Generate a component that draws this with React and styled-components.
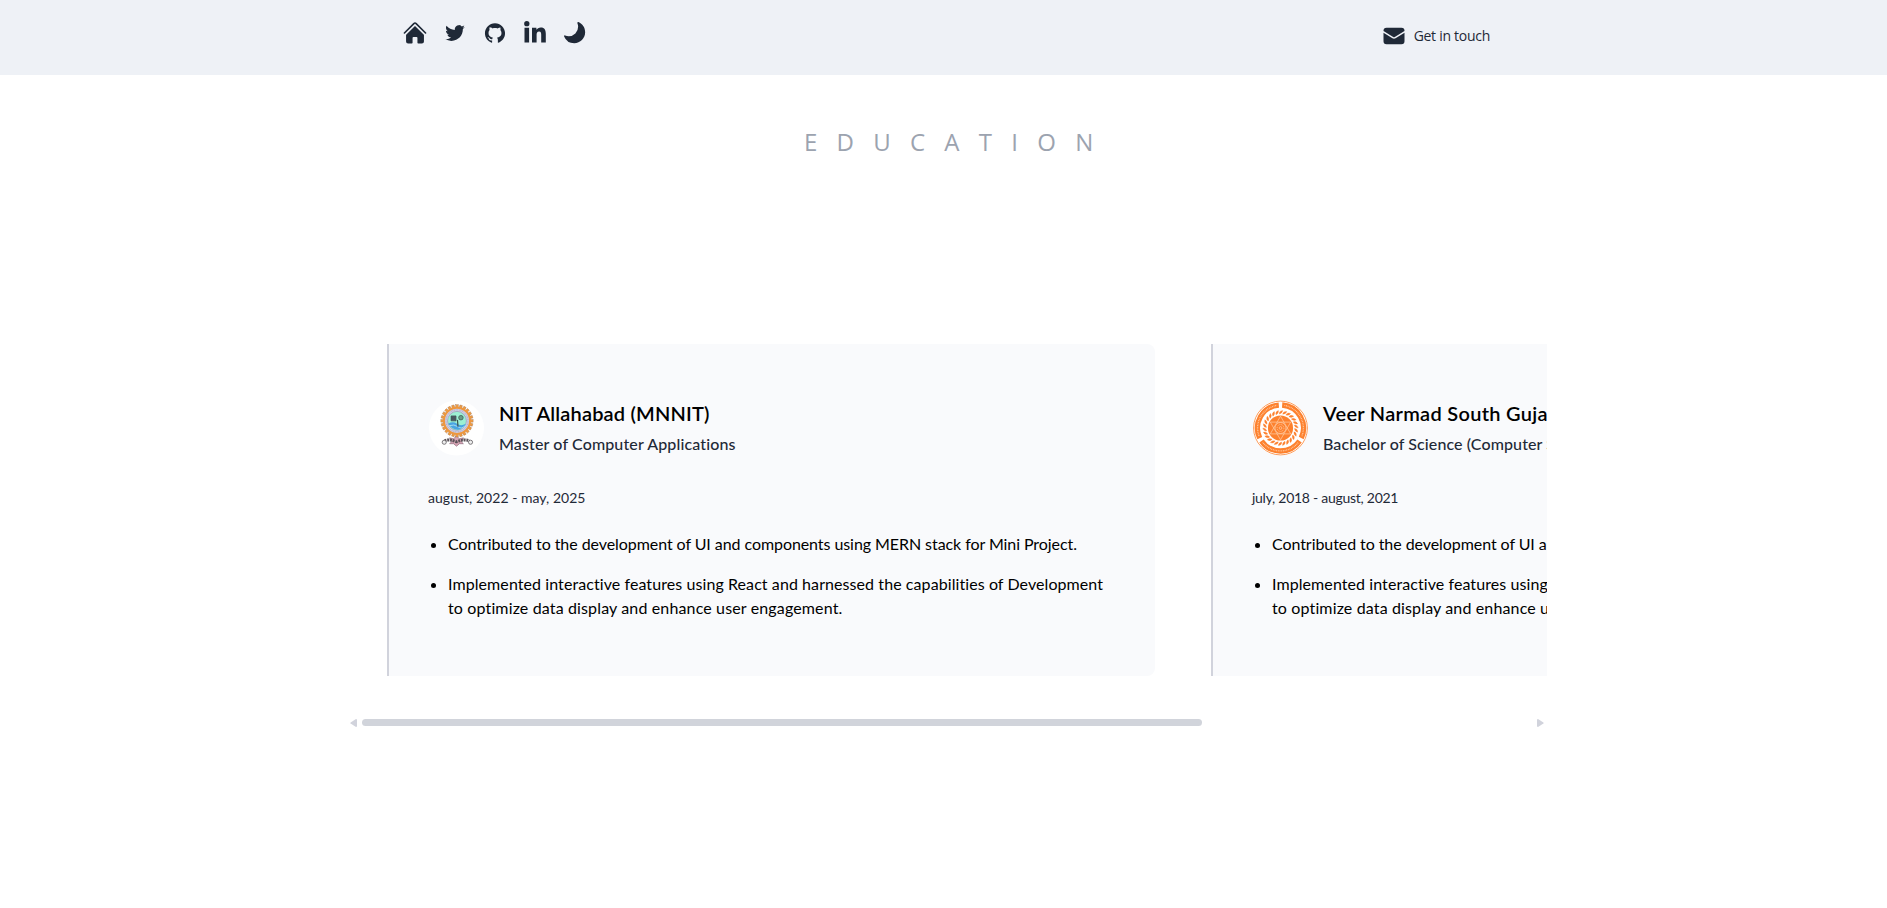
import React from "react";
import styled, { createGlobalStyle } from "styled-components";
import { HiHome, HiMoon, HiEnvelope } from "react-icons/hi2";
import { IoLogoTwitter } from "react-icons/io5";
import { AiFillGithub } from "react-icons/ai";

const GlobalStyle = createGlobalStyle`
  *, *::before, *::after { box-sizing: border-box; }
  html, body { margin: 0; background: #fff; overflow: hidden; }
  body { font-family: Lato, "Open Sans", sans-serif; color: #000; }
  h1, h2, p, ul { margin: 0; padding: 0; font-weight: inherit; }
`;

const Header = styled.header`
  height: 75px;
  background: #eef1f6;
  color: #1f2937;
`;

const HeaderInner = styled.div`
  display: flex;
  justify-content: space-between;
  width: 1087px;
  margin: 0 0 0 403px;
  padding-top: 19px;
`;

const Socials = styled.nav`
  display: flex;
  gap: 16px;
`;

const IconLink = styled.a`
  display: flex;
  align-items: center;
  justify-content: center;
  width: 24px;
  height: 28px;
  color: inherit;
  svg {
    flex: none;
    width: ${(p) => p.$size}px;
    height: ${(p) => p.$size}px;
    transform: translate(${(p) => p.$x || 0}px, ${(p) => p.$y || 0}px) scaleX(${(p) => (p.$mirrored ? -1 : 1)});
  }
`;

const Contact = styled.a`
  display: flex;
  align-items: center;
  gap: 8px;
  height: 34px;
  color: #1f2937;
  font: 400 14px/20px "Open Sans", sans-serif;
  letter-spacing: -0.28px;
  svg { width: 24px; height: 24px; }
`;

const Title = styled.h1`
  padding: 49px 0 0 804px;
  color: #9ca3af;
  font: 400 24px/36px "Open Sans", sans-serif;
  letter-spacing: 19.25px;
  white-space: nowrap;
`;

const Carousel = styled.section`
  width: 1200px;
  margin: 184px 0 0 347px;
  overflow: hidden;
`;

const Track = styled.div`
  display: flex;
  gap: 56px;
  padding: 0 40px 43px;
`;

const Card = styled.article`
  flex: 0 0 768px;
  height: 332px;
  padding: 56px 40px;
  border-left: 2px solid #d1d3dc;
  border-radius: 0 8px 8px 0;
  background: #f9fafc;
`;

const CardHead = styled.div`
  display: flex;
  gap: 15px;
  height: 56px;
  svg { flex: none; width: 55px; height: 56px; }
`;

const Heading = styled.div`
  display: flex;
  flex-direction: column;
  gap: 5px;
  margin-top: -1px;
  white-space: nowrap;
`;

const School = styled.h2`
  font-size: 20px;
  font-weight: 600;
  line-height: 28px;
  letter-spacing: ${(p) => p.$tracking}px;
`;

const Degree = styled.p`
  color: #1f2937;
  font-size: 16px;
  font-weight: 500;
  line-height: 24px;
  letter-spacing: ${(p) => p.$tracking}px;
`;

const Dates = styled.p`
  margin: 32px 0 0 -1px;
  color: #1f2937;
  font-size: 14px;
  line-height: 20px;
  letter-spacing: ${(p) => p.$tracking}px;
`;

const Points = styled.ul`
  display: flex;
  flex-direction: column;
  gap: 16px;
  margin-top: 24px;
  padding-left: 19px;
  font-size: 16px;
  line-height: 24px;
`;

const Line = styled.span`
  letter-spacing: ${(p) => p.$tracking}px;
`;

const Scrollbar = styled.div`
  display: flex;
  align-items: center;
  justify-content: space-between;
  height: 8px;
  padding: 0 3px;
  svg { flex: none; width: 7px; height: 8px; fill: #d1d3dc; }
`;

const Rail = styled.div`
  flex: 1;
  height: 8px;
  margin: 0 5px;
`;

const Thumb = styled.div`
  width: 840px;
  height: 7px;
  border-radius: 4px;
  background: #d1d4db;
`;

const spokes = (n) => Array.from({ length: n }, (_, i) => (i * 360) / n);

function LinkedIn() {
  return (
    <svg viewBox="0 0 22 22" fill="currentColor">
      <circle cx="2.8" cy="2.7" r="2.65" />
      <path d="M.5 6.8H5.1V21.6H.5ZM8 6.8H12.4V8.8C13.2 7.4 14.8 6.4 16.8 6.4 20.7 6.4 21.8 9 21.8 12.7V21.6H17.2V13.7C17.2 11.8 17 10.4 15.1 10.4 13.1 10.4 12.6 11.9 12.6 13.7V21.6H8Z" />
    </svg>
  );
}

function GearEmblem() {
  return (
    <svg viewBox="0 0 56 56">
      <circle cx="28" cy="28" r="28" fill="#fff" />
      <path d="M28 36 31 39 35 38 33 42 35 44 31 44 28 46.5 25 44 21 44 23 42 21 38 25 39Z" fill="#d7a5b5" stroke="#81596b" strokeWidth=".6" />
      <g transform="translate(28.5 20.7)">
        {spokes(24).map((a) => (
          <rect key={a} x="-1.3" y="-16.4" width="2.6" height="4" fill="#ef9c42" stroke="#9b6945" strokeWidth=".35" transform={`rotate(${a})`} />
        ))}
        <circle r="13.3" fill="#d3d1e6" stroke="#ed973f" strokeWidth="2" />
        <circle r="11.2" fill="none" stroke="#a09fbe" strokeWidth=".9" strokeDasharray="1 .7" />
        <circle r="9.6" fill="#9cf0d3" stroke="#8a90ac" strokeWidth=".6" />
        <path d="M-9 3Q-4 0 0 3T9 3Q7 8 1 9Q-5 9-9 3Z" fill="#4aa4e2" />
        <path d="M-8 5Q-3 3 1 6T8 5" fill="none" stroke="#bdeaf2" strokeWidth=".8" />
        <path d="M-6-5h5v5h-5ZM-5-4v3M-3-4v3" fill="#52636a" stroke="#34464d" strokeWidth=".7" />
        <circle cx="4" cy="-3.2" r="2.3" fill="#6a9c87" stroke="#3d6059" strokeWidth=".8" />
        <path d="M.5-1 1 6" stroke="#39504c" strokeWidth="1.2" />
      </g>
      <path d="M16 41Q20 39 28 42Q36 39 41 41" fill="none" stroke="#5c5359" strokeWidth="3" strokeDasharray="2 .8" />
      <g fill="#eee" stroke="#5d595d" strokeWidth=".8">
        <circle cx="15.5" cy="42.5" r="2.1" />
        <circle cx="42.3" cy="42.5" r="2.1" />
      </g>
    </svg>
  );
}

function SealEmblem() {
  const orange = "#fd812e";
  return (
    <svg viewBox="-28 -28 56 56" fill="none" stroke={orange}>
      <circle r="28" fill="#fff" stroke="none" />
      <circle r="27.4" strokeWidth=".8" />
      {[0, 120, 240].map((a) => (
        <g key={a} transform={`rotate(${a})`}>
          <path d="M1.7-23.4A23.5 23.5 0 0 1 21.1 10.2" strokeWidth="5.4" />
          <path d="M4-23A23.3 23.3 0 0 1 21.7 8.5" stroke="#ffc79d" strokeWidth="1.4" strokeDasharray=".9 .8" />
        </g>
      ))}
      {spokes(26).map((a) => (
        <path key={a} d="M-1.2-14.2Q-1.6-17.4 2.2-17.9Q2-15-1.2-14.2Z" fill={orange} strokeWidth=".3" transform={`rotate(${a})`} />
      ))}
      <circle r="12.8" fill={orange} stroke="none" />
      <g stroke="#ffd0aa" strokeWidth=".7">
        <path d="M0-12 10.4 6H-10.4ZM0 12 10.4-6H-10.4Z" />
        <circle r="5.6" />
        <circle r="3.5" strokeDasharray="1.3 .8" />
        <circle r="1.4" />
      </g>
    </svg>
  );
}

const entries = [
  {
    school: "NIT Allahabad (MNNIT)",
    degree: "Master of Computer Applications",
    dates: "august, 2022 - may, 2025",
    Emblem: GearEmblem,
    tracking: [0.17, 0.13, 0.03],
  },
  {
    school: "Veer Narmad South Gujarat University",
    degree: "Bachelor of Science (Computer Science)",
    dates: "july, 2018 - august, 2021",
    Emblem: SealEmblem,
    tracking: [0.29, 0.1, -0.27],
  },
];

export default function App() {
  return (
    <>
      <GlobalStyle />
      <Header>
        <HeaderInner>
          <Socials>
            <IconLink $size={26}><HiHome /></IconLink>
            <IconLink $size={21} $x={-0.5} $y={-0.5}><IoLogoTwitter /></IconLink>
            <IconLink $size={23} $x={-0.5} $y={-0.5}><AiFillGithub /></IconLink>
            <IconLink $size={22} $y={-1}><LinkedIn /></IconLink>
            <IconLink $size={25} $x={-0.5} $y={-0.5} $mirrored><HiMoon /></IconLink>
          </Socials>
          <Contact><HiEnvelope />Get in touch</Contact>
        </HeaderInner>
      </Header>
      <Title>EDUCATION</Title>
      <Carousel>
        <Track>
          {entries.map(({ school, degree, dates, Emblem, tracking }) => (
            <Card key={school}>
              <CardHead>
                <Emblem />
                <Heading>
                  <School $tracking={tracking[0]}>{school}</School>
                  <Degree $tracking={tracking[1]}>{degree}</Degree>
                </Heading>
              </CardHead>
              <Dates $tracking={tracking[2]}>{dates}</Dates>
              <Points>
                <li>
                  <Line $tracking={-0.07}>Contributed to the development of UI and components using MERN stack for Mini Project.</Line>
                </li>
                <li>
                  <Line $tracking={0.08}>Implemented interactive features using React and harnessed the capabilities of Development </Line>
                  <Line $tracking={0.14}>to optimize data display and enhance user engagement.</Line>
                </li>
              </Points>
            </Card>
          ))}
        </Track>
        <Scrollbar>
          <svg viewBox="0 0 7 8"><path d="M6 0Q7 0 7 1V7Q7 8 6 8L.6 4.6Q0 4 .6 3.4Z" /></svg>
          <Rail><Thumb /></Rail>
          <svg viewBox="0 0 7 8"><path d="M1 0Q0 0 0 1V7Q0 8 1 8L6.4 4.6Q7 4 6.4 3.4Z" /></svg>
        </Scrollbar>
      </Carousel>
    </>
  );
}
